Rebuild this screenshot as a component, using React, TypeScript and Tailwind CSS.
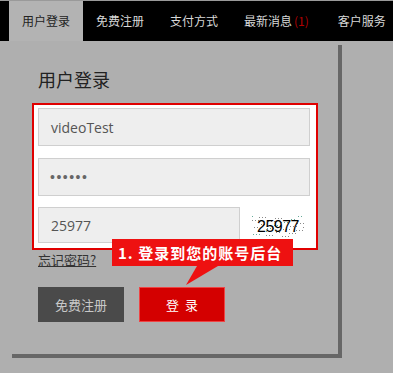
import React from "react";

const TABS = ["用户登录", "免费注册", "支付方式", "最新消息", "客户服务"];

function Captcha() {
  return (
    <div className="relative w-[52px] h-[21px] bg-white overflow-hidden">
      <svg className="absolute inset-0" width="52" height="21">
        {Array.from({ length: 60 }).map((_, i) => (
          <rect
            key={i}
            x={(i * 37) % 52}
            y={(i * 13) % 21}
            width="1"
            height="1"
            fill={i % 3 === 0 ? "#6a9" : "#888"}
          />
        ))}
      </svg>
      <span className="relative block text-center text-[16px] leading-[21px] text-black tracking-[-0.5px] font-['Liberation_Sans',sans-serif]">
        25977
      </span>
    </div>
  );
}

export default function App() {
  return (
    <div className="w-[393px] h-[373px] bg-[#afafaf] overflow-hidden font-['Noto_Sans_CJK_SC',sans-serif]">
      {/* NAV */}
      <div className="h-[41px] bg-black border-t border-[#9a9a9a] flex pl-[9px] text-[12px] text-[#d8d8d8] whitespace-nowrap">
        {TABS.map((t, i) => (
          <div
            key={t}
            className={`h-full shrink-0 flex items-center px-[13px] ${i === 0 ? "bg-[#b3b3b3] text-[#222]" : ""}`}
          >
            {t}
            {i === 3 && <span className="text-[#b00000] ml-[2px] mr-[3px]">(1)</span>}
          </div>
        ))}
      </div>

      {/* PANEL */}
      <div className="relative ml-3 mt-1 w-[330px] h-[313px] border-r-4 border-b-4 border-[#676767] pl-5">
        <h1 className="pl-[6px] pt-[20px] text-[18px] leading-[28px] text-[#222]">用户登录</h1>

        <div className="mt-[10px] w-[286px] h-[147px] border-2 border-[#e00000] bg-white pl-1 pr-[6px] pt-[3px] flex flex-col gap-3">
          <div className="h-[38px] bg-[#eeeeee] border border-[#cfcfcf] flex items-center pl-3 text-[14px] text-[#555] font-['Open_Sans',sans-serif]">
            videoTest
          </div>
          <div className="h-[38px] bg-[#eeeeee] border border-[#cfcfcf] flex items-center pl-[11px] text-[14px] tracking-[1.5px] text-[#666] font-['Liberation_Sans',sans-serif]">
            ••••••
          </div>
          <div className="flex items-center -mt-[1px]">
            <div className="w-[202px] h-[36px] bg-[#eeeeee] border border-[#cfcfcf] flex items-center pl-3 text-[14px] text-[#555] font-['Open_Sans',sans-serif]">
              25977
            </div>
            <div className="ml-3 mt-[3px]">
              <Captcha />
            </div>
          </div>
        </div>

        <a className="block ml-[6px] mt-[1px] w-fit text-[13px] leading-[18px] text-[#333] underline">忘记密码?</a>

        <div className="ml-[6px] mt-[18px] flex gap-[15px]">
          <button className="w-[86px] h-[35px] bg-[#4a4a4a] text-[#c8c8c8] text-[13px]">免费注册</button>
          <button className="w-[86px] h-[35px] bg-[#d40000] border border-[#e44] text-white text-[13px] tracking-[6px] pl-[6px]">
            登录
          </button>
        </div>

        {/* CALLOUT */}
        <div className="absolute left-[100px] top-[194px]">
          <div className="w-[181px] h-[27px] bg-[#ee1111] text-white text-[15px] font-bold leading-[27px] pl-[6px] tracking-[1px] whitespace-nowrap">
            1. 登录到您的账号后台
          </div>
          <svg className="absolute left-[74px] top-[27px]" width="34" height="20">
            <polygon points="11,0 32,0 0,19" fill="#ee1111" />
          </svg>
        </div>
      </div>
    </div>
  );
}
